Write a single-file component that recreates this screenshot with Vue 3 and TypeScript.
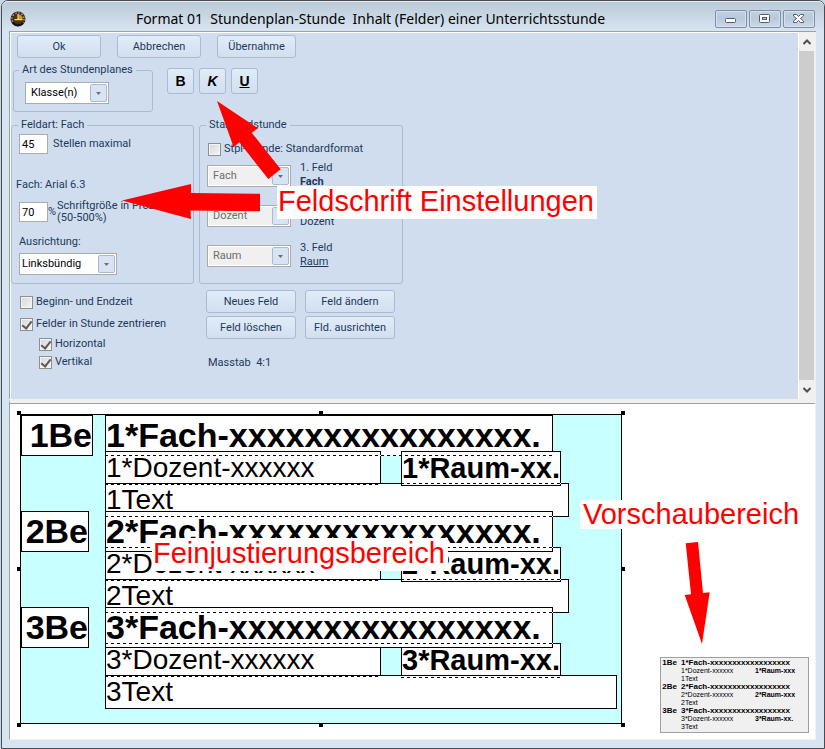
<script setup lang="ts">
import { ref } from 'vue'

interface Field {
  x: number
  y: number
  w: number
  h: number
  z: number
  kind: 'be' | 'fach' | 'dozent' | 'raum' | 'text'
  text: string
}

interface Dash {
  x: number
  y: number
  w: number
}

const caption = 'Format 01  Stundenplan-Stunde  Inhalt (Felder) einer Unterrichtsstunde'
const planType = ref('Klasse(n)')
const alignment = ref('Linksbündig')
const digits = ref('45')
const percent = ref('70')
const standardFormat = ref(false)
const showTimes = ref(false)
const centerFields = ref(true)
const centerHorizontal = ref(true)
const centerVertical = ref(true)

const slots = [
  { name: 'Fach', label: '1. Feld', style: 'strong' },
  { name: 'Dozent', label: '2. Feld', style: 'plain' },
  { name: 'Raum', label: '3. Feld', style: 'under' },
]

// Field frames on the design canvas, relative to the lesson's inner corner.
const fields: Field[] = [
  { x: 0, y: 0, w: 72, h: 41, z: 1, kind: 'be', text: '1Be' },
  { x: 84, y: 0, w: 448, h: 41, z: 1, kind: 'fach', text: '1*Fach-xxxxxxxxxxxxxxxx.' },
  { x: 84, y: 36, w: 276, h: 34, z: 2, kind: 'dozent', text: '1*Dozent-xxxxxx' },
  { x: 84, y: 68, w: 464, h: 34, z: 3, kind: 'text', text: '1Text' },
  { x: 380, y: 36, w: 160, h: 35, z: 4, kind: 'raum', text: '1*Raum-xx.' },
  { x: 0, y: 96, w: 68, h: 41, z: 5, kind: 'be', text: '2Be' },
  { x: 84, y: 132, w: 276, h: 34, z: 5, kind: 'dozent', text: '2*Dozent-xxxxxx' },
  { x: 84, y: 164, w: 464, h: 34, z: 6, kind: 'text', text: '2Text' },
  { x: 380, y: 132, w: 160, h: 35, z: 7, kind: 'raum', text: '2*Raum-xx.' },
  { x: 84, y: 96, w: 448, h: 41, z: 8, kind: 'fach', text: '2*Fach-xxxxxxxxxxxxxxxx.' },
  { x: 0, y: 192, w: 68, h: 41, z: 9, kind: 'be', text: '3Be' },
  { x: 84, y: 228, w: 276, h: 34, z: 9, kind: 'dozent', text: '3*Dozent-xxxxxx' },
  { x: 380, y: 228, w: 160, h: 35, z: 9, kind: 'raum', text: '3*Raum-xx.' },
  { x: 84, y: 260, w: 512, h: 34, z: 10, kind: 'text', text: '3Text' },
  { x: 84, y: 192, w: 448, h: 41, z: 11, kind: 'fach', text: '3*Fach-xxxxxxxxxxxxxxxx.' },
]

// Edges hidden by an overlapping field are shown dashed.
const dashes: Dash[] = [
  { x: 84, y: 40, w: 448 },
  { x: 84, y: 69, w: 276 },
  { x: 380, y: 68, w: 160 },
  { x: 84, y: 101, w: 448 },
  { x: 84, y: 132, w: 448 },
  { x: 84, y: 165, w: 276 },
  { x: 380, y: 164, w: 160 },
  { x: 84, y: 197, w: 448 },
  { x: 84, y: 228, w: 448 },
  { x: 84, y: 261, w: 276 },
  { x: 380, y: 262, w: 160 },
]

const handles = ['nw', 'n', 'ne', 'w', 'e', 'sw', 's', 'se']

const preview = [
  { be: '1Be', fach: '1*Fach-xxxxxxxxxxxxxxxxxx', dozent: '1*Dozent-xxxxxx', raum: '1*Raum-xxx', text: '1Text' },
  { be: '2Be', fach: '2*Fach-xxxxxxxxxxxxxxxxxx', dozent: '2*Dozent-xxxxxx', raum: '2*Raum-xxx', text: '2Text' },
  { be: '3Be', fach: '3*Fach-xxxxxxxxxxxxxxxxxx', dozent: '3*Dozent-xxxxxx', raum: '3*Raum-xx.', text: '3Text' },
]

const px = (n: number): string => `${n}px`
</script>

<template>
  <div class="window">
    <header class="titlebar">
      <svg class="app-icon" viewBox="0 0 16 16" aria-hidden="true">
        <circle cx="8" cy="8" r="7.5" fill="#33271d" />
        <circle cx="8" cy="8" r="6" fill="none" stroke="#b09d88" stroke-width="1.6" stroke-dasharray="1.4 1.7" />
        <circle cx="8" cy="8" r="4.8" fill="#4a3413" />
        <path d="M8 3.500V8h4.800A4.800 4.800 0 0 0 8 3.500Z" fill="#d09a20" />
        <path d="M8 3v5.400M4.500 8.600h8" stroke="#ffd94a" stroke-width="1.2" />
        <path d="M3 11.500a6 6 0 0 0 10 0" stroke="#17110c" stroke-width="2" fill="none" />
      </svg>
      <h1 class="caption">{{ caption }}</h1>
      <div class="win-buttons">
        <button type="button" aria-label="Minimieren">
          <svg viewBox="0 0 30 16"><rect x="9.500" y="7.500" width="10" height="4" rx="1" fill="#fff" stroke="#535b70" /></svg>
        </button>
        <button type="button" aria-label="Maximieren">
          <svg viewBox="0 0 30 16">
            <rect x="9.500" y="3.500" width="10" height="8" rx="1" fill="#fff" stroke="#535b70" />
            <rect x="12.500" y="6.500" width="4" height="2" fill="#b7c6d8" stroke="#535b70" />
          </svg>
        </button>
        <button type="button" aria-label="Schließen">
          <svg viewBox="0 0 30 16">
            <path d="M9.500 3.500h3l2 2 2-2h3v1.500l-3 2.500 3 2.500v1.500h-3l-2-2-2 2h-3v-1.500l3-2.500-3-2.500z" fill="#fff" stroke="#535b70" />
          </svg>
        </button>
      </div>
    </header>

    <section class="panel">
      <form class="form" @submit.prevent>
        <div class="toolbar">
          <button type="button" class="btn">Ok</button>
          <button type="button" class="btn">Abbrechen</button>
          <button type="button" class="btn">Übernahme</button>
        </div>

        <div class="type-row">
          <fieldset class="group type-group">
            <legend>Art des Stundenplanes</legend>
            <span class="combo combo-type">
              <select v-model="planType" aria-label="Art des Stundenplanes"><option>Klasse(n)</option></select>
              <span class="drop"><svg viewBox="0 0 5 3"><path d="M0 0h5L2.500 3z" /></svg></span>
            </span>
          </fieldset>
          <div class="font-buttons">
            <button type="button" class="btn glyph" aria-label="Fett"><b>B</b></button>
            <button type="button" class="btn glyph" aria-label="Kursiv"><i>K</i></button>
            <button type="button" class="btn glyph" aria-label="Unterstrichen"><u>U</u></button>
          </div>
        </div>

        <div class="groups">
          <fieldset class="group field-group">
            <legend>Feldart: Fach</legend>
            <div class="line">
              <input id="digits" v-model="digits" type="text" class="num" />
              <label for="digits" class="digits-label">Stellen maximal</label>
            </div>
            <p class="font-info">Fach: Arial 6.3</p>
            <div class="line percent-line">
              <input id="percent" v-model="percent" type="text" class="num" />
              <span>%</span>
              <label for="percent" class="percent-label">Schriftgröße in Prozent<br />(50-500%)</label>
            </div>
            <label for="align" class="align-label">Ausrichtung:</label>
            <span class="combo combo-align">
              <select id="align" v-model="alignment"><option>Linksbündig</option></select>
              <span class="drop"><svg viewBox="0 0 5 3"><path d="M0 0h5L2.500 3z" /></svg></span>
            </span>
          </fieldset>

          <fieldset class="group standard-group">
            <legend>Standardstunde</legend>
            <label class="check"><input v-model="standardFormat" type="checkbox" />Stpl-Stunde: Standardformat</label>
            <div v-for="slot in slots" :key="slot.name" class="slot">
              <span class="combo combo-slot">
                <select disabled :aria-label="slot.label"><option>{{ slot.name }}</option></select>
                <span class="drop"><svg viewBox="0 0 5 3"><path d="M0 0h5L2.500 3z" /></svg></span>
              </span>
              <span class="slot-text">{{ slot.label }}<br /><span :class="slot.style">{{ slot.name }}</span></span>
            </div>
          </fieldset>
        </div>

        <div class="groups bottom">
          <div class="checks">
            <label class="check"><input v-model="showTimes" type="checkbox" />Beginn- und Endzeit</label>
            <label class="check"><input v-model="centerFields" type="checkbox" />Felder in Stunde zentrieren</label>
            <label class="check nested"><input v-model="centerHorizontal" type="checkbox" />Horizontal</label>
            <label class="check nested"><input v-model="centerVertical" type="checkbox" />Vertikal</label>
          </div>
          <div class="actions">
            <button type="button" class="btn">Neues Feld</button>
            <button type="button" class="btn">Feld ändern</button>
            <button type="button" class="btn">Feld löschen</button>
            <button type="button" class="btn">Fld. ausrichten</button>
            <p class="scale">Masstab&nbsp; 4:1</p>
          </div>
        </div>
      </form>
      <div class="scrollbar">
        <button type="button" aria-label="Nach oben"><svg viewBox="0 0 8 6"><path d="M0.500 5L4 1.500 7.500 5" /></svg></button>
        <div class="thumb"></div>
        <button type="button" aria-label="Nach unten"><svg viewBox="0 0 8 6"><path d="M0.500 1L4 4.500 7.500 1" /></svg></button>
      </div>
    </section>

    <section class="editor">
      <div class="stage">
        <div
          v-for="f in fields"
          :key="f.text"
          class="field"
          :class="f.kind"
          :style="{ left: px(f.x), top: px(f.y), width: px(f.w), height: px(f.h), zIndex: f.z }"
        >{{ f.text }}</div>
        <span
          v-for="(d, i) in dashes"
          :key="i"
          class="dash"
          :style="{ left: px(d.x), top: px(d.y), width: px(d.w) }"
        ></span>
        <span v-for="h in handles" :key="h" class="handle" :class="h"></span>
      </div>
      <div class="preview">
        <div v-for="p in preview" :key="p.be" class="lesson">
          <b class="p-be">{{ p.be }}</b>
          <b class="p-fach">{{ p.fach }}</b>
          <span class="p-dozent">{{ p.dozent }}</span>
          <b class="p-raum">{{ p.raum }}</b>
          <span class="p-text">{{ p.text }}</span>
        </div>
      </div>
    </section>

    <svg class="arrows" width="825" height="749" viewBox="0 0 825 749" aria-hidden="true">
      <path d="M217 101L258 128.300 251.700 132.700 280.700 169.300 268.300 179 239.300 142.300 233.700 147.300Z" />
      <path d="M122 200.500L191 184V193L260 193.700V211.300L190.500 210.500 191 219Z" />
      <path d="M685.700 543.300L698 542 703 593 709.700 592.300 702 644 684.700 595 691 594.300Z" />
    </svg>
    <span class="note note-font">Feldschrift Einstellungen</span>
    <span class="note note-fine">Feinjustierungsbereich</span>
    <span class="note note-preview">Vorschaubereich</span>
  </div>
</template>

<style>
body {
  margin: 0;
  background: #c3d9ea;
}
</style>

<style scoped>
* {
  box-sizing: border-box;
}
.window {
  position: relative;
  display: flex;
  flex-direction: column;
  min-height: 100vh;
  margin-left: 1px;
  padding: 0 8px 8px 7px;
  border: 1px solid #4b4b4f;
  border-radius: 7px 7px 0 0;
  background: #d7e4f2;
  color: #1e395b;
  font: 11px/14px Roboto, 'Liberation Sans', Arial, sans-serif;
}
.titlebar {
  display: flex;
  align-items: center;
  height: 30px;
  margin: 0 -8px 0 -7px;
  padding: 4px 9px 0 8px;
  border-top: 1px solid #e4edf5;
  border-radius: 6px 6px 0 0;
  background: linear-gradient(#bccad8, #d7e4f2);
}
.app-icon {
  width: 16px;
  height: 16px;
}
.caption {
  flex: 1;
  margin: 0;
  color: #000;
  font: 14px/20px 'Noto Sans', 'Open Sans', sans-serif;
  text-align: center;
  white-space: pre;
}
.win-buttons {
  display: flex;
  gap: 2px;
}
.win-buttons button {
  width: 32px;
  height: 18px;
  padding: 0;
  border: 1px solid #7e8da9;
  border-radius: 2px;
  background: linear-gradient(#c3d1e0, #b9c9da 45%, #cbd9e8);
  box-shadow: inset 0 0 0 1px #d5e1ee;
}
.win-buttons svg {
  display: block;
  width: 30px;
  height: 16px;
}
.panel {
  display: flex;
  border: 1px solid #a0a0a0;
  border-width: 1px 0 0 1px;
  background: #f0f0f0;
}
.form {
  flex: 1;
  border: solid #fff;
  border-width: 1px 1px 0 1px;
  padding: 2px 0 26px;
  background: #d0ddee;
}
.toolbar {
  display: flex;
  gap: 16px;
  padding-left: 6px;
}
.btn {
  height: 23px;
  padding: 0;
  border: 1px solid #abbad0;
  border-radius: 3px;
  background: linear-gradient(#e1ecfa, #d2dfef);
  color: #1e395b;
  font: inherit;
}
.toolbar .btn {
  width: 84px;
}
.toolbar .btn:last-child {
  width: 79px;
}
.type-row {
  display: flex;
  gap: 14px;
  margin-top: 5px;
  padding-left: 2px;
}
.font-buttons {
  display: flex;
  gap: 5px;
  padding-top: 5px;
}
.btn.glyph {
  width: 27px;
  height: 26px;
  color: #000;
  font: bold 14px/20px 'Liberation Sans', Arial, sans-serif;
}
.group {
  min-width: 0;
  margin: 0;
  border: 1px solid #abbad0;
  border-radius: 3px;
  padding: 0 7px;
}
.group legend {
  margin-left: -1px;
  padding: 0 3px;
  line-height: 14px;
  white-space: nowrap;
}
.type-group {
  width: 140px;
  height: 49px;
  padding-left: 11px;
}
.type-group legend {
  margin: 0 0 5px -6px;
}
.combo {
  display: grid;
  height: 22px;
  border: 1px solid #ababab;
  background: #fff;
}
.combo > * {
  grid-area: 1 / 1;
}
.combo select {
  min-width: 0;
  border: 0;
  padding: 0 20px 0 5px;
  appearance: none;
  background: transparent;
  color: #000;
  font: inherit;
  opacity: 1;
}
.combo select:disabled {
  margin: 1px 18px 1px 1px;
  padding: 0 0 0 4px;
  background: #f0f0f0;
  color: #6d6d6d;
}
.drop {
  display: grid;
  place-items: center;
  justify-self: end;
  width: 17px;
  margin: 1px;
  border: 1px solid #abbad0;
  border-radius: 2px;
  background: #d8e4f3;
  pointer-events: none;
}
.drop svg {
  width: 5px;
  height: 3px;
  fill: #707070;
}
.combo-type,
.combo-slot {
  width: 84px;
}
.combo-align {
  width: 98px;
}
.combo-align select {
  padding-left: 2px;
}
.groups {
  display: grid;
  grid-template-columns: 183px 204px;
  gap: 5px;
  margin-top: 6px;
}
.groups .group {
  height: 166px;
}
.line {
  display: flex;
  align-items: center;
}
.num {
  width: 29px;
  height: 20px;
  border: 1px solid #ababab;
  padding: 0 2px;
  background: #fff;
  color: #000;
  font: inherit;
}
.digits-label {
  padding-left: 5px;
}
.font-info {
  margin: 24px 0 8px -3px;
}
.percent-label {
  padding-left: 1px;
  line-height: 12px;
  white-space: nowrap;
}
.percent-line {
  height: 24px;
}
.align-label {
  display: block;
  margin: 11px 0 4px;
}
.field-group .line:first-of-type {
  margin-top: 2px;
}
.check {
  display: flex;
  align-items: center;
  gap: 3px;
}
.check input {
  display: grid;
  flex: none;
  place-items: center;
  width: 13px;
  height: 13px;
  margin: 0;
  border: 1px solid #8e8f8f;
  appearance: none;
  background: linear-gradient(135deg, #d6d8dc, #f4f4f4);
  box-shadow: inset 0 0 0 1px #f4f4f4;
}
.check input:checked::before {
  width: 4px;
  height: 8px;
  border: solid #5a5a5a;
  border-width: 0 2px 2px 0;
  content: '';
  transform: rotate(38deg);
}
.standard-group .check {
  margin: 10px 0 9px 1px;
}
.slot {
  display: flex;
  align-items: flex-start;
  gap: 9px;
  height: 40px;
}
.slot-text {
  margin-top: -4px;
}
.strong {
  font-weight: bold;
}
.under {
  text-decoration: underline;
}
.bottom {
  margin-top: 6px;
}
.checks {
  display: flex;
  flex-direction: column;
  padding: 5px 0 0 9px;
}
.checks .check:nth-child(2) {
  margin: 8px 0 6px;
}
.nested {
  margin: 0 0 4px 19px;
}
.actions {
  display: grid;
  grid-template-columns: 90px 90px;
  align-content: start;
  gap: 3px 9px;
  padding-left: 7px;
}
.scale {
  margin: 14px 0 0 2px;
}
.scrollbar {
  display: flex;
  flex-direction: column;
  width: 17px;
  padding-right: 2px;
}
.scrollbar button {
  display: grid;
  place-items: center;
  height: 19px;
  border: 0;
  padding: 0;
  background: #f0f0f0;
}
.scrollbar svg {
  width: 8px;
  height: 6px;
  fill: none;
  stroke: #505050;
  stroke-width: 2;
}
.thumb {
  flex: 1;
  background: #cdcdcd;
}
.editor {
  display: flex;
  flex: 1;
  align-items: flex-end;
  justify-content: space-between;
  border: 1px solid #f0f0f0;
  border-top: 4px solid #f0f0f0;
  border-left-color: #a0a0a0;
  padding: 11px 6px 6px 10px;
  background: #fff;
  box-shadow: inset 0 1px #a0a0a0;
}
.stage {
  position: relative;
  align-self: flex-start;
  width: 602px;
  height: 310px;
  border: 1px solid #000;
  background: #c8ffff;
  color: #000;
  font: 28px/32px 'Liberation Sans', Arial, sans-serif;
}
.field {
  position: absolute;
  overflow: hidden;
  border: 1px solid #000;
  background: #fff;
  white-space: nowrap;
}
.be,
.fach {
  font: bold 34px/39px 'Liberation Sans', Arial, sans-serif;
}
.be {
  text-align: right;
}
.raum {
  font-size: 29px;
  font-weight: bold;
}
.dash {
  position: absolute;
  z-index: 12;
  height: 1px;
  background: repeating-linear-gradient(90deg, #000 0 3px, #fff 3px 6px);
}
.handle {
  position: absolute;
  z-index: 13;
  width: 4px;
  height: 4px;
  background: #000;
}
.nw,
.n,
.ne {
  top: -4px;
}
.w,
.e {
  top: 152px;
}
.sw,
.s,
.se {
  bottom: -4px;
}
.nw,
.w,
.sw {
  left: -4px;
}
.n,
.s {
  left: 298px;
}
.ne,
.e,
.se {
  right: -4px;
}
.preview {
  width: 149px;
  height: 76px;
  border: 1px solid #a0a0a0;
  padding-top: 1px;
  background: #f0f0f0;
  color: #000;
  font: 7px/8px 'Liberation Sans', Arial, sans-serif;
}
.lesson {
  display: grid;
  grid-template-columns: 16px 70px 1fr;
  column-gap: 4px;
  height: 24px;
  white-space: nowrap;
}
.p-be,
.p-fach {
  font-size: 8px;
}
.p-be {
  text-align: right;
}
.p-fach {
  grid-column: 2 / 4;
}
.p-dozent,
.p-text {
  grid-column: 2;
}
.arrows {
  position: absolute;
  top: -1px;
  left: -2px;
  z-index: 20;
  fill: #f00;
  pointer-events: none;
}
.note {
  position: absolute;
  z-index: 21;
  padding: 0 3px 2px 1px;
  background: #fff;
  color: #f00;
  font: 29px/31px 'Liberation Sans', Arial, sans-serif;
  white-space: nowrap;
  pointer-events: none;
}
.note-font {
  top: 185px;
  left: 275px;
}
.note-fine {
  top: 537px;
  left: 150px;
}
.note-preview {
  top: 499px;
  left: 578px;
  padding: 0 3px;
  line-height: 29px;
}
</style>
